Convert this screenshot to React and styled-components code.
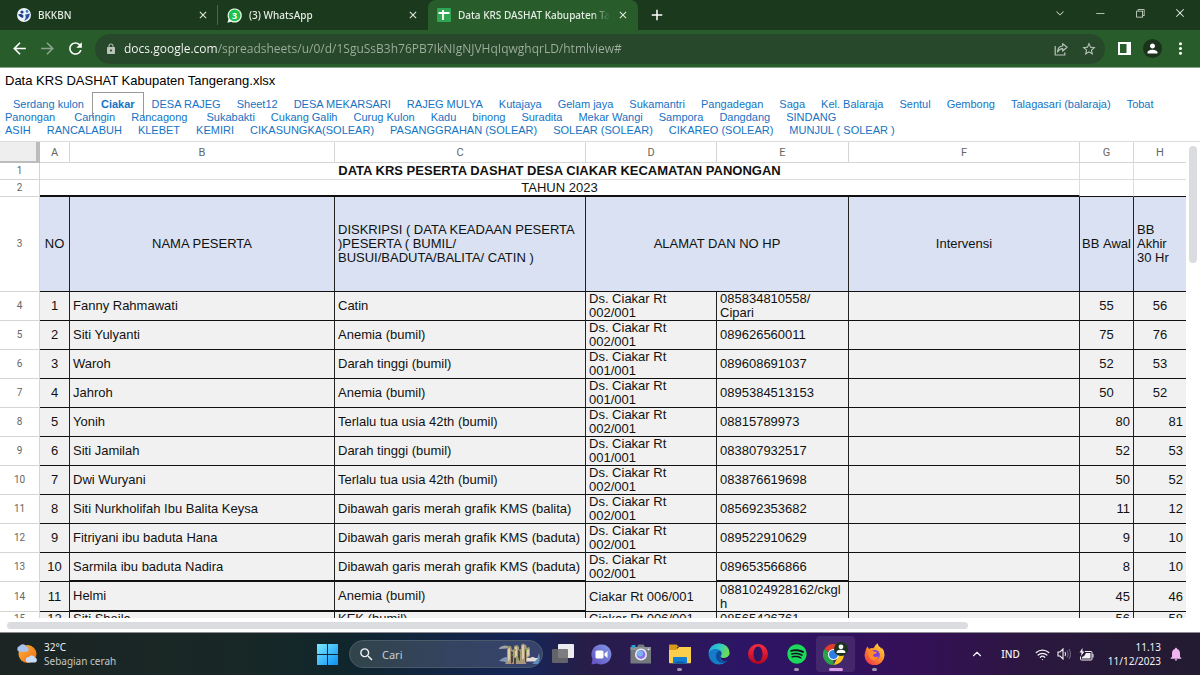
import { useState } from "react";
import styled, { createGlobalStyle, css } from "styled-components";
import {
  MdArrowBack,
  MdArrowForward,
  MdRefresh,
  MdLock,
  MdStarBorder,
  MdPerson,
  MdClose,
  MdAdd,
  MdMoreVert,
  MdNotifications,
  MdOutlineSearch,
} from "react-icons/md";
import {
  VscChevronDown,
  VscChromeMinimize,
  VscChromeRestore,
  VscChromeClose,
} from "react-icons/vsc";
import { FaSpotify } from "react-icons/fa";
import { ChevronUp, Wifi } from "lucide-react";

const GlobalStyle = createGlobalStyle`
  * {
    box-sizing: border-box;
  }
  body {
    margin: 0;
    background: white;
    overflow: hidden;
  }
  button {
    border: 0;
    padding: 0;
    background: none;
    color: inherit;
    font: inherit;
    cursor: pointer;
  }
  svg {
    display: block;
    flex-shrink: 0;
  }
`;

const uiFont = `"Noto Sans", "Open Sans", sans-serif`;
const sheetFont = `"Liberation Sans", Arial, sans-serif`;

const Screen = styled.div`
  display: flex;
  flex-direction: column;
  height: 100vh;
  font-family: ${sheetFont};
`;

/* browser window */

const TabStrip = styled.header`
  display: flex;
  height: 30px;
  padding-left: 8px;
  background-color: #1b391c;
  color: #e4ece4;
  font-family: ${uiFont};
  font-size: 10px;
  font-weight: 500;
`;
const TabItem = styled.div`
  display: flex;
  align-items: center;
  gap: 7px;
  width: 210px;
  padding: 0 8px 0 9px;
  border-right: 1px solid transparent;
  ${({ $divider }) =>
    $divider &&
    css`
      border-image: linear-gradient(
          transparent 20%,
          #4b654b 20%,
          #4b654b 80%,
          transparent 80%
        )
        1;
    `}
  ${({ $active }) =>
    $active &&
    css`
      background-color: #285d2b;
      border-radius: 8px 8px 0 0;
    `}
`;
const TabLabel = styled.button`
  flex: 1;
  min-width: 0;
  padding-bottom: 1px;
  overflow: hidden;
  white-space: nowrap;
  text-align: left;
  mask-image: linear-gradient(90deg, black 88%, transparent);
`;
const TabClose = styled.button`
  font-size: 12px;
`;
const NewTab = styled.button`
  width: 38px;
  display: grid;
  place-items: center;
  font-size: 18px;
  color: white;
`;
const WindowButtons = styled.div`
  display: flex;
  margin-left: auto;
`;
const WindowButton = styled.button`
  width: 40px;
  height: 25px;
  display: grid;
  place-items: center;
  font-size: 12px;
`;

const Toolbar = styled.div`
  display: flex;
  align-items: center;
  height: 38px;
  padding: 0 6px 0 5px;
  background-color: #285d2b;
  border-bottom: 1px solid #86a688;
  color: white;
`;
const ToolButton = styled.button`
  width: 28px;
  height: 28px;
  display: grid;
  place-items: center;
  font-size: ${({ $large }) => ($large ? 19 : 16)}px;
  opacity: ${({ $dim }) => ($dim ? 0.45 : 1)};
`;
const AddressBar = styled.form`
  flex: 1;
  display: flex;
  align-items: center;
  height: 30px;
  margin: 0 5px 0 6px;
  padding: 0 2px 0 10px;
  border-radius: 15px;
  background-color: #27482a;
  color: #b9c4ba;
  font-size: 12px;
`;
const AddressInput = styled.input`
  flex: 1;
  margin-left: 7px;
  padding: 0;
  border: 0;
  outline: 0;
  font-family: "Open Sans", sans-serif;
  font-size: 12px;
  color: transparent;
  background: linear-gradient(90deg, #ffffff 93px, #9fb0a0 93px);
  background-clip: text;
`;
const Avatar = styled.span`
  display: grid;
  place-items: center;
  width: 19px;
  height: 19px;
  border-radius: 50%;
  background-color: #1b331c;
  font-size: 15px;
`;

/* spreadsheet */

const Sheet = styled.main`
  flex: 1;
  min-height: 0;
  display: flex;
  flex-direction: column;
`;
const DocTitle = styled.h1`
  margin: 0;
  padding: 5px 5px 4px;
  font-size: 13px;
  font-weight: 400;
  line-height: 16px;
`;
const SheetMenu = styled.nav`
  padding: 5px 5px 4px;
  border-bottom: 1px solid #dcdcdc;
  font-size: 11px;
  line-height: 13px;
`;
const SheetLink = styled.a`
  padding: 0 8px;
  color: #1573c4;
  text-decoration: none;
  ${({ $active }) =>
    $active &&
    css`
      padding: 5px 8px 8px;
      border: 1px solid #999;
      border-bottom: 0;
      font-weight: 700;
    `}
`;
const GridArea = styled.div`
  flex: 1;
  min-height: 0;
  display: grid;
  grid-template-columns: 1fr 14px;
  grid-template-rows: 1fr 14px;
`;
const GridView = styled.div`
  overflow: hidden;
`;
const Track = styled.div`
  display: flex;
  flex-direction: ${({ $vertical }) => ($vertical ? "column" : "row")};
  padding: ${({ $vertical }) => ($vertical ? "4px 3px" : "4px 7px 3px")};
`;
const Thumb = styled.div`
  flex: 0 0 ${({ $size }) => $size};
  border-radius: 4px;
  background-color: #dadce0;
`;

const Table = styled.table`
  width: 100%;
  table-layout: fixed;
  border-collapse: separate;
  border-spacing: 0;
  font-size: 13px;
  line-height: 14px;
  color: #111;
`;
const Row = styled.tr`
  height: ${({ $height }) => $height}px;
`;
const ColumnHead = styled.th`
  padding: 2px 0 0;
  border-right: 1px solid #d5d5d5;
  border-bottom: 1px solid #d5d5d5;
  color: #666;
  font-family: Roboto, sans-serif;
  font-size: 11px;
  font-weight: 400;
  &:last-child {
    border-right: 0;
  }
`;
const Corner = styled.td`
  padding: 0;
  background-color: #eee;
  border-right: 4px solid #bcbcbc;
  border-bottom: 2px solid #bcbcbc;
`;
const RowHead = styled.th`
  padding: 0;
  border-right: 1px solid #d5d5d5;
  border-bottom: 1px solid #d5d5d5;
  color: #666;
  font-family: Roboto, sans-serif;
  font-size: 10px;
  font-weight: 400;
`;
const TitleCell = styled.td`
  padding: 0 3px;
  border-right: 1px solid #dcdcdc;
  border-bottom: ${({ $line }) => $line || "1px solid #dcdcdc"};
  text-align: center;
  font-weight: ${({ $bold }) => ($bold ? 700 : 400)};
  &:last-child {
    border-right: 0;
  }
`;
const HeadCell = styled.th`
  padding: ${({ $align }) => ($align === "left" ? "0 2px 0 3px" : "0 2px")};
  border-right: 1px solid #222;
  border-bottom: 1px solid #111;
  background-color: #d9e1f2;
  font-weight: 400;
  text-align: ${({ $align }) => $align || "center"};
  &:last-child {
    border-right: 0;
  }
`;
const Cell = styled.td`
  padding: 0 3px;
  border-right: 1px solid #222;
  border-bottom: ${({ $thick }) => ($thick ? 2 : 1)}px solid #111;
  background-color: #f1f1f1;
  white-space: pre-line;
  overflow-wrap: anywhere;
  text-align: ${({ $align }) => $align || "left"};
  &:last-child {
    border-right: 0;
  }
`;

/* taskbar */

const Taskbar = styled.footer`
  display: grid;
  grid-template-columns: 1fr auto 1fr;
  align-items: center;
  height: 43px;
  border-top: 1px solid #8c8c92;
  background: linear-gradient(
    90deg,
    #1c2524 0%,
    #182826 20%,
    #10262d 29%,
    #162558 44%,
    #271d47 49%,
    #2d1566 62%,
    #351058 76%,
    #2b173f 86%,
    #221c30 100%
  );
  color: #f1f1f4;
  font-family: ${uiFont};
  font-size: 11px;
`;
const Weather = styled.button`
  display: flex;
  align-items: center;
  gap: 6px;
  padding-left: 16px;
  text-align: left;
  font-size: 10px;
  line-height: 14px;
`;
const Dim = styled.span`
  color: #c3c6c6;
`;
const Apps = styled.div`
  display: flex;
  align-items: center;
  padding-left: 2px;
`;
const AppButton = styled.button`
  display: grid;
  place-items: center;
  position: relative;
  width: 39px;
  height: 36px;
  ${({ $focused }) =>
    $focused &&
    css`
      border-radius: 4px;
      background-color: rgba(255, 255, 255, 0.09);
    `}
`;
const Running = styled.span`
  position: absolute;
  bottom: 1px;
  width: ${({ $wide }) => ($wide ? 14 : 5)}px;
  height: 3px;
  border-radius: 2px;
  background-color: ${({ $wide }) => ($wide ? "#d99be6" : "#a196b4")};
`;
const SpotifyDisc = styled.span`
  border-radius: 50%;
  background-color: #10141a;
`;
const SearchBox = styled.label`
  display: flex;
  align-items: center;
  gap: 7px;
  width: 194px;
  height: 28px;
  margin-left: 2px;
  padding: 0 1px 0 8px;
  border: 1px solid #4a5a68;
  border-radius: 14px;
  background-color: rgba(255, 255, 255, 0.14);
  font-size: 17px;
`;
const SearchInput = styled.input`
  flex: 1;
  min-width: 0;
  padding: 0;
  border: 0;
  outline: 0;
  background: none;
  color: white;
  font-family: ${uiFont};
  font-size: 11px;
  &::placeholder {
    color: #c7cfd3;
  }
`;
const Tray = styled.div`
  display: flex;
  align-items: center;
  justify-content: flex-end;
  gap: 7px;
  padding-right: 16px;
`;
const TrayButton = styled.button`
  display: flex;
  align-items: center;
  gap: 7px;
  margin-right: ${({ $space }) => $space || 0}px;
  font-size: 10px;
  font-weight: 500;
`;
const Clock = styled.time`
  text-align: right;
  font-size: 10px;
  line-height: 14px;
`;

const SheetsLogo = () => (
  <svg width="14" height="14" viewBox="0 0 14 14">
    <rect width="14" height="14" rx="1" fill="#2fa653" />
    <path d="M1.5 5h11M6 2v10" stroke="white" strokeWidth="1.8" />
  </svg>
);
const BkkbnLogo = () => (
  <svg width="14" height="14" viewBox="0 0 14 14">
    <circle cx="7" cy="7" r="7" fill="#eef3fa" />
    <circle cx="5" cy="4" r="1.6" fill="#1f3f86" />
    <circle cx="10" cy="3.4" r="1.3" fill="#2d7fd0" />
    <path d="M1 6.500c2-1 4.500-.5 5.500 1.200L6 10C4 9.500 2 8.500 1 6.500z" fill="#1f3f86" />
    <path d="M8 6.500c2 .2 3-.8 4.500-1.300.6 3-1.500 6.500-5.500 7.500 1.800-2 2.200-4 1-6.200z" fill="#23509f" />
  </svg>
);
const WhatsAppLogo = () => (
  <svg width="15" height="15" viewBox="0 0 15 15">
    <path d="M.4 14.700 1.500 11A7.100 7.100 0 1 1 4.200 13.700z" fill="#e8f8ec" />
    <circle cx="7.600" cy="7.400" r="5.900" fill="#1fbf4b" />
    <text x="7.600" y="10.800" textAnchor="middle" fill="white" fontSize="9" fontWeight="700">
      3
    </text>
  </svg>
);
const ShareIcon = () => (
  <svg width="14" height="14" viewBox="0 0 14 14" fill="none" stroke="currentColor" strokeWidth="1.200">
    <path d="M1.200 4v9h9.600v-2.500" />
    <path d="M3.500 10c.2-4 2-5.800 5.200-6V1.600L13 5.300 8.700 9V6.700C6.200 6.700 4.800 7.800 3.500 10z" strokeLinejoin="round" />
  </svg>
);
const SidePanelIcon = () => (
  <svg width="13" height="13" viewBox="0 0 13 13">
    <path d="M0 0h13v13H0zM2 2v9h6.500V2z" fill="white" fillRule="evenodd" />
  </svg>
);
const WeatherIcon = () => (
  <svg width="22" height="22" viewBox="0 0 22 22">
    <defs>
      <linearGradient id="sun" x1="0" y1="0" x2="1" y2="1">
        <stop offset="0" stopColor="#fbb43a" />
        <stop offset="1" stopColor="#ef6a15" />
      </linearGradient>
    </defs>
    <circle cx="11.500" cy="11" r="9" fill="url(#sun)" />
    <path d="M3.500 8.800a3 3 0 0 1 0-5.800 4 4 0 0 1 7 .8 2.600 2.600 0 0 1 .5 5z" fill="#a9c2ee" />
    <path d="M12.500 19.500a2.800 2.800 0 0 1 .3-5.600 3.700 3.700 0 0 1 6.400.9 2.500 2.500 0 0 1 .2 4.700z" fill="#c9dcfa" />
  </svg>
);
const WindowsLogo = () => (
  <svg width="21" height="21" viewBox="0 0 21 21">
    <defs>
      <linearGradient id="win" x1="0" y1="0" x2="1" y2="1">
        <stop offset="0" stopColor="#7be9fc" />
        <stop offset="1" stopColor="#0a8ff5" />
      </linearGradient>
    </defs>
    <path d="M0 0h10v10H0zM11 0h10v10H11zM0 11h10v10H0zM11 11h10v10H11z" fill="url(#win)" />
  </svg>
);
const Landscape = () => (
  <svg width="43" height="24" viewBox="0 0 43 24">
    <path d="M1 6q3-3 7-2.500L12 5l-3 1.500L1 7z" fill="#a3a0a6" />
    <path d="M1 19q4-4 8-4l1 6q-5-2-9-2z" fill="#8496b5" />
    <path d="M34 22q5-3 7-11 2 6-1 11z" fill="#5f8fbf" />
    <path d="M26 17q3-2 6-1 3-2 5 0l3 0-3 3.500h-9z" fill="#e6dcdc" />
    <path d="M7 22l2-3V8l1-3 3-1 1 4 2-1V4l3-1 2 2v3l2-1V3l2-1.500L28 3l1 3 2-1 1 3v6l-3 2-1 6z" fill="#a8977c" />
    <path d="M10 7l2-1v11l-2 3zM17 5l2 0v9l-2 1zM24 4l2-1 0 13-2 2zM29 8l2-1v6l-2 2z" fill="#dccdaa" />
    <path d="M13 9l2 1v10l-2 2zM20 8l2 1v10l-2-2zM27 7l1 0v13l-1 1zM16 16l2 0v6h-2z" fill="#4c433d" />
    <path d="M9 5l3-1.500V6zM15 8l3-1v2zM18 3l2 .5-1 1.500zM13 13l3-1v2zM21 11l3-1v2zM26 8l3-1v2zM30 5l2 1-1 1zM18 17l3-1v2z" fill="#6fae35" />
  </svg>
);
const TaskViewIcon = () => (
  <svg width="22" height="20" viewBox="0 0 22 20">
    <rect x="6" width="16" height="14" rx="1" fill="#ececee" />
    <rect y="5" width="16" height="14" rx="1" fill="#6d6c70" fillOpacity=".88" />
  </svg>
);
const ChatIcon = () => (
  <svg width="21" height="21" viewBox="0 0 21 21">
    <defs>
      <linearGradient id="chat" x1="1" y1="0" x2="0" y2="1">
        <stop offset="0" stopColor="#8299e6" />
        <stop offset="1" stopColor="#6250c0" />
      </linearGradient>
    </defs>
    <path d="M.5 20.500 1.500 15A10 10 0 1 1 6 19.400z" fill="url(#chat)" />
    <rect x="4.500" y="6.500" width="8" height="8" rx="1.500" fill="white" />
    <path d="m13.500 9.500 3-2.500v7l-3-2.500z" fill="white" />
  </svg>
);
const CameraIcon = () => (
  <svg width="22" height="20" viewBox="0 0 22 20">
    <path d="M7 3l1.500-2.500h5L15 3h6v16.500H.5V3z" fill="#74797e" />
    <path d="M.5 3H21v3H.5z" fill="#8d9296" />
    <rect x="1.500" y="1" width="4" height="2.500" fill="#1ba4dd" />
    <circle cx="11" cy="10.500" r="6" fill="#e7eaf2" />
    <circle cx="11" cy="10.500" r="4.400" fill="#8b6ee8" />
    <circle cx="10" cy="9.500" r="3" fill="#7ab4ef" />
    <circle cx="18.500" cy="5.500" r=".9" fill="#dce0e4" />
  </svg>
);
const FolderIcon = () => (
  <svg width="22" height="20" viewBox="0 0 22 20">
    <path d="M0 1.500Q0 .5 1 .5h6.500L10 3h-2v4H0z" fill="#d89a17" />
    <path d="M0 6h7l3-3h12v15.500q0 .8-.8.8H.8q-.8 0-.8-.8z" fill="#fbcf4c" />
    <path d="M4 19.500V14q0-1 1-1h12q1 0 1 1v5.500z" fill="#137fd1" />
    <path d="M6.500 17.500h9v2h-9z" fill="#0b5ba8" />
  </svg>
);
const EdgeIcon = () => (
  <svg width="22" height="22" viewBox="0 0 22 22">
    <defs>
      <linearGradient id="edge" x1="0" y1="0" x2="1" y2="0.300">
        <stop offset="0" stopColor="#25a7e6" />
        <stop offset=".55" stopColor="#32c8c6" />
        <stop offset="1" stopColor="#6bdc52" />
      </linearGradient>
    </defs>
    <circle cx="11" cy="11" r="10.500" fill="#157cc9" />
    <path d="M.6 10C1.500 4 6 .5 11 .5c6.500 0 10.500 4.500 10.500 9.300 0 3.200-2.300 5.200-5.300 5.200-2.400 0-3.700-1-3.700-1.800 0-.6 1-1 1-2.700C13.500 8 11 6 7.600 6 4.200 6 1.600 8 .6 10z" fill="url(#edge)" />
    <path d="M13.500 10.500c0-1-.5-2-1.300-2.800C9.500 8 7.500 10.500 8 14c.6 3.600 3.700 5.900 7 5.800 2-.1 3.600-1.100 4.700-2.400-6 2-9.500-1.300-7.200-4.200.7-.8 1-1.600 1-2.700z" fill="#104a9d" />
    <path d="M12.600 13c-.3 1.500 1.500 2.200 3.600 2 2.200-.1 3.800-1.100 4.600-2.400l1.200.6v3.300l-2 1c-5 1.600-8.700-1-7.400-4.500z" fill="#2a1666" />
  </svg>
);
const OperaIcon = () => (
  <svg width="20" height="20" viewBox="0 0 20 20">
    <defs>
      <linearGradient id="opera" x1="0" y1="0" x2="0" y2="1">
        <stop offset="0" stopColor="#fb2d3f" />
        <stop offset="1" stopColor="#b3061f" />
      </linearGradient>
    </defs>
    <path d="M10 0a10 10 0 1 0 0 20 10 10 0 1 0 0-20zm0 2.500c2.700 0 4.500 3.300 4.500 7.500s-1.800 7.500-4.500 7.500S5.500 14.200 5.500 10 7.300 2.500 10 2.500z" fill="url(#opera)" fillRule="evenodd" />
  </svg>
);
const ChromeIcon = () => (
  <svg width="25" height="24" viewBox="0 0 25 24">
    <path d="M10.500 12.500 1.400 7.200A10.500 10.500 0 0 1 19.600 7.200z" fill="#e33b2e" />
    <path d="M10.500 12.500 10.500 23A10.500 10.500 0 0 1 1.400 7.200z" fill="#2ba24c" />
    <path d="M10.500 7.500h9.200A10.500 10.500 0 0 1 10.500 23l4.500-8z" fill="#fbc116" />
    <circle cx="10.500" cy="12.500" r="5.500" fill="white" />
    <circle cx="10.500" cy="12.500" r="4.500" fill="#2d7ce8" />
    <circle cx="18" cy="7" r="7" fill="#1b331c" />
    <circle cx="18" cy="4.800" r="2.400" fill="white" />
    <path d="M13.500 11q0-3.300 4.500-3.300t4.500 3.300z" fill="white" />
  </svg>
);
const FirefoxIcon = () => (
  <svg width="21" height="22" viewBox="0 0 21 22">
    <defs>
      <linearGradient id="fox" x1="1" y1="0" x2="0.200" y2="1">
        <stop offset="0" stopColor="#ffe14d" />
        <stop offset=".5" stopColor="#ff9328" />
        <stop offset="1" stopColor="#f0344d" />
      </linearGradient>
    </defs>
    <path d="M1.500 8Q2 5 3.500 3.500L5 6q1.500-1 3-1l1.500.2Q11 2 13.500.3 14 3 16.500 4.500l.8 1.500.5-1.500q3 3.500 2.700 8A10 10 0 0 1 .5 12z" fill="url(#fox)" />
    <circle cx="10.800" cy="12" r="5" fill="#7b3fe0" />
    <path d="M4 8q3-1.500 6 .5 2 0 3 1-1 1.500-3.500 1.800-1 2 1.500 2.700 2 .3 3.500-1-.5 4-4.500 4.300Q4.500 17 4 8z" fill="#ff8a2a" />
  </svg>
);
const VolumeIcon = () => (
  <svg width="15" height="12" viewBox="0 0 15 12" fill="none" stroke="currentColor" strokeWidth="1.100">
    <path d="M1 4h2l3-3v10L3 8H1z" />
    <path d="M8 4q1.200 2 0 4" />
    <path d="M10 2.500q2.200 3.500 0 7M12 1q3 5 0 10" opacity=".35" />
  </svg>
);
const BatteryIcon = () => (
  <svg width="15" height="13" viewBox="0 0 15 13">
    <path d="M6 3.500h6q1 0 1 1V11q0 1-1 1H2.500q-1 0-1-1V8.500" fill="none" stroke="currentColor" />
    <path d="M7 5h4.500v5.500H3V9q3-1 4-4z" fill="currentColor" />
    <path d="M13.500 6h1v3.500h-1z" fill="currentColor" />
    <path d="M3.500 0 .5 4.500h2L2 8l3.500-4.500h-2z" fill="currentColor" />
  </svg>
);

const sheets = [
  "Serdang kulon",
  "Ciakar",
  "DESA RAJEG",
  "Sheet12",
  "DESA MEKARSARI",
  "RAJEG MULYA",
  "Kutajaya",
  "Gelam jaya",
  "Sukamantri",
  "Pangadegan",
  "Saga",
  "Kel. Balaraja",
  "Sentul",
  "Gembong",
  "Talagasari (balaraja)",
  "Tobat\nPanongan\u00a0",
  "Caringin",
  "Rancagong\u00a0",
  "Sukabakti",
  "Cukang Galih",
  "Curug Kulon",
  "Kadu",
  "binong",
  "Suradita",
  "Mekar Wangi",
  "Sampora",
  "Dangdang",
  "SINDANG\nASIH",
  "RANCALABUH",
  "KLEBET",
  "KEMIRI",
  "CIKASUNGKA(SOLEAR)",
  "PASANGGRAHAN (SOLEAR)",
  "SOLEAR (SOLEAR)",
  "CIKAREO (SOLEAR)",
  "MUNJUL ( SOLEAR )",
];

const columns = ["A", "B", "C", "D", "E", "F", "G", "H"];
const columnWidths = [30, 265, 251, 131, 132, null, 54, 52];

const people = [
  ["Fanny Rahmawati", "Catin", "Ds. Ciakar Rt\n002/001", "085834810558/\nCipari", 55, 56],
  ["Siti Yulyanti", "Anemia (bumil)", "Ds. Ciakar Rt\n002/001", "089626560011", 75, 76],
  ["Waroh", "Darah tinggi (bumil)", "Ds. Ciakar Rt\n001/001", "089608691037", 52, 53],
  ["Jahroh", "Anemia (bumil)", "Ds. Ciakar Rt\n001/001", "0895384513153", 50, 52],
  ["Yonih", "Terlalu tua usia 42th (bumil)", "Ds. Ciakar Rt\n002/001", "08815789973", 80, 81],
  ["Siti Jamilah", "Darah tinggi (bumil)", "Ds. Ciakar Rt\n001/001", "083807932517", 52, 53],
  ["Dwi Wuryani", "Terlalu tua usia 42th (bumil)", "Ds. Ciakar Rt\n002/001", "083876619698", 50, 52],
  ["Siti Nurkholifah Ibu Balita Keysa", "Dibawah garis merah grafik KMS (balita)", "Ds. Ciakar Rt\n002/001", "085692353682", 11, 12],
  ["Fitriyani ibu baduta Hana", "Dibawah garis merah grafik KMS (baduta)", "Ds. Ciakar Rt\n002/001", "089522910629", 9, 10],
  ["Sarmila ibu baduta Nadira", "Dibawah garis merah grafik KMS (baduta)", "Ds. Ciakar Rt\n002/001", "089653566866", 8, 10],
  ["Helmi", "Anemia (bumil)", "Ciakar Rt 006/001", "0881024928162/ckglh", 45, 46],
  ["Siti Sheila", "KEK (bumil)", "Ciakar Rt 006/001", "08565426761", 56, 58],
];

const SheetTable = () => (
  <Table>
    <colgroup>
      <col width="40" />
      {columnWidths.map((width, i) => (
        <col key={columns[i]} width={width || undefined} />
      ))}
    </colgroup>
    <thead>
      <Row $height={21}>
        <Corner />
        {columns.map((name) => (
          <ColumnHead key={name} scope="col">
            {name}
          </ColumnHead>
        ))}
      </Row>
    </thead>
    <tbody>
      <Row $height={17}>
        <RowHead scope="row">1</RowHead>
        <TitleCell colSpan={6} $bold>
          DATA KRS PESERTA DASHAT DESA CIAKAR KECAMATAN PANONGAN
        </TitleCell>
        <TitleCell />
        <TitleCell />
      </Row>
      <Row $height={17}>
        <RowHead scope="row">2</RowHead>
        <TitleCell colSpan={6} $line="2px solid #111">
          TAHUN 2023
        </TitleCell>
        <TitleCell $line="1px solid #111" />
        <TitleCell $line="1px solid #111" />
      </Row>
      <Row $height={95}>
        <RowHead scope="row">3</RowHead>
        <HeadCell>NO</HeadCell>
        <HeadCell>NAMA PESERTA</HeadCell>
        <HeadCell $align="left">
          DISKRIPSI ( DATA KEADAAN PESERTA )PESERTA ( BUMIL/
          <br />
          BUSUI/BADUTA/BALITA/ CATIN )
        </HeadCell>
        <HeadCell colSpan={2}>ALAMAT DAN NO HP</HeadCell>
        <HeadCell>Intervensi</HeadCell>
        <HeadCell>BB&nbsp;Awal</HeadCell>
        <HeadCell $align="left">
          BB
          <br />
          Akhir
          <br />
          30 Hr
        </HeadCell>
      </Row>
      {people.map(([name, note, address, phone, first, last], i) => {
        const numberAlign = i < 4 ? "center" : "right";
        const thick = i === 9 || i === 10;
        return (
          <Row key={name} $height={i === 10 ? 30 : i === 11 ? 15 : 29}>
            <RowHead scope="row">{i + 4}</RowHead>
            <Cell $align="center">{i + 1}</Cell>
            <Cell $thick={thick}>{name}</Cell>
            <Cell $thick={thick}>{note}</Cell>
            <Cell>{address}</Cell>
            <Cell $thick={i === 9}>{phone}</Cell>
            <Cell />
            <Cell $align={numberAlign}>{first}</Cell>
            <Cell $align={numberAlign}>{last}</Cell>
          </Row>
        );
      })}
    </tbody>
  </Table>
);

const Tab = ({ icon, title, active, divider }) => (
  <TabItem $active={active} $divider={divider}>
    {icon}
    <TabLabel>{title}</TabLabel>
    <TabClose aria-label={`Close ${title}`}>
      <MdClose />
    </TabClose>
  </TabItem>
);

const TaskApp = ({ label, children, running, focused }) => (
  <AppButton aria-label={label} $focused={focused}>
    {children}
    {running && <Running $wide={focused} />}
  </AppButton>
);

const App = () => {
  const [url, setUrl] = useState(
    "docs.google.com/spreadsheets/u/0/d/1SguSsB3h76PB7IkNIgNJVHqIqwghqrLD/htmlview#"
  );
  const [query, setQuery] = useState("");
  const [current, setCurrent] = useState("Ciakar");

  const onSubmit = (event) => event.preventDefault();

  return (
    <Screen>
      <GlobalStyle />
      <TabStrip>
        <Tab icon={<BkkbnLogo />} title="BKKBN" divider />
        <Tab icon={<WhatsAppLogo />} title="(3) WhatsApp" />
        <Tab icon={<SheetsLogo />} title="Data KRS DASHAT Kabupaten Tangerang" active />
        <NewTab aria-label="New tab">
          <MdAdd />
        </NewTab>
        <WindowButtons>
          <WindowButton aria-label="Search tabs">
            <VscChevronDown />
          </WindowButton>
          <WindowButton aria-label="Minimize">
            <VscChromeMinimize />
          </WindowButton>
          <WindowButton aria-label="Restore">
            <VscChromeRestore />
          </WindowButton>
          <WindowButton aria-label="Close window">
            <VscChromeClose />
          </WindowButton>
        </WindowButtons>
      </TabStrip>
      <Toolbar>
        <ToolButton aria-label="Back" $large>
          <MdArrowBack />
        </ToolButton>
        <ToolButton aria-label="Forward" $large $dim>
          <MdArrowForward />
        </ToolButton>
        <ToolButton aria-label="Reload" $large>
          <MdRefresh />
        </ToolButton>
        <AddressBar onSubmit={onSubmit}>
          <MdLock />
          <AddressInput
            aria-label="Address"
            type="text"
            spellCheck={false}
            value={url}
            onChange={(event) => setUrl(event.target.value)}
          />
          <ToolButton type="button" aria-label="Share">
            <ShareIcon />
          </ToolButton>
          <ToolButton type="button" aria-label="Bookmark">
            <MdStarBorder />
          </ToolButton>
        </AddressBar>
        <ToolButton aria-label="Side panel">
          <SidePanelIcon />
        </ToolButton>
        <ToolButton aria-label="Profile">
          <Avatar>
            <MdPerson />
          </Avatar>
        </ToolButton>
        <ToolButton aria-label="Menu" $large>
          <MdMoreVert />
        </ToolButton>
      </Toolbar>

      <Sheet>
        <DocTitle>Data KRS DASHAT Kabupaten Tangerang.xlsx</DocTitle>
        <SheetMenu>
          {sheets.map((name) => (
            <SheetLink
              key={name}
              href="#"
              $active={name === current}
              onClick={() => setCurrent(name)}
            >
              {name.split("\n").map((part, i) => (
                <span key={part}>
                  {i > 0 && <br />}
                  {part}
                </span>
              ))}
            </SheetLink>
          ))}
        </SheetMenu>
        <GridArea>
          <GridView>
            <SheetTable />
          </GridView>
          <Track $vertical>
            <Thumb $size="25%" />
          </Track>
          <Track>
            <Thumb $size="82%" />
          </Track>
        </GridArea>
      </Sheet>

      <Taskbar>
        <Weather>
          <WeatherIcon />
          <span>
            32°C
            <br />
            <Dim>Sebagian cerah</Dim>
          </span>
        </Weather>
        <Apps>
          <TaskApp label="Start">
            <WindowsLogo />
          </TaskApp>
          <SearchBox>
            <MdOutlineSearch />
            <SearchInput
              type="text"
              aria-label="Cari"
              placeholder="Cari"
              value={query}
              onChange={(event) => setQuery(event.target.value)}
            />
            <Landscape />
          </SearchBox>
          <TaskApp label="Task view">
            <TaskViewIcon />
          </TaskApp>
          <TaskApp label="Chat">
            <ChatIcon />
          </TaskApp>
          <TaskApp label="Camera">
            <CameraIcon />
          </TaskApp>
          <TaskApp label="File Explorer" running>
            <FolderIcon />
          </TaskApp>
          <TaskApp label="Edge">
            <EdgeIcon />
          </TaskApp>
          <TaskApp label="Opera">
            <OperaIcon />
          </TaskApp>
          <TaskApp label="Spotify" running>
            <SpotifyDisc>
              <FaSpotify size={20} color="#1ed760" />
            </SpotifyDisc>
          </TaskApp>
          <TaskApp label="Chrome" running focused>
            <ChromeIcon />
          </TaskApp>
          <TaskApp label="Firefox" running>
            <FirefoxIcon />
          </TaskApp>
        </Apps>
        <Tray>
          <TrayButton $space={10} aria-label="Hidden icons">
            <ChevronUp size={14} />
          </TrayButton>
          <TrayButton $space={8}>IND</TrayButton>
          <TrayButton $space={7} aria-label="Network, volume and battery">
            <Wifi size={15} />
            <VolumeIcon />
            <BatteryIcon />
          </TrayButton>
          <Clock>
            11.13
            <br />
            11/12/2023
          </Clock>
          <MdNotifications size={16} color="#efb5ee" />
        </Tray>
      </Taskbar>
    </Screen>
  );
};

export default App;
